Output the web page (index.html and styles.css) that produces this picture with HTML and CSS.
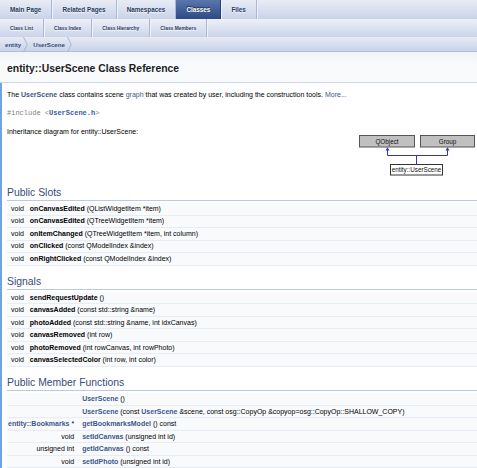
FILE: index.html
```html
<!DOCTYPE html>
<html lang="en">
<head>
<meta charset="utf-8">
<title>entity::UserScene Class Reference</title>
<link rel="stylesheet" href="styles.css">
</head>
<body>
<div class="navbar">
  <ul class="tabs tabs1">
    <li class="tab">Main Page</li>
    <li class="tab">Related Pages</li>
    <li class="tab">Namespaces</li>
    <li class="tab active">Classes</li>
    <li class="tab">Files</li>
  </ul>
  <ul class="tabs tabs2">
    <li class="tab">Class List</li>
    <li class="tab">Class Index</li>
    <li class="tab">Class Hierarchy</li>
    <li class="tab">Class Members</li>
  </ul>
  <ul class="navpath">
    <li class="crumb first">entity</li>
    <li class="sep"><svg width="5" height="15" viewBox="0 0 5 15"><path d="M0.5 0 L4.3 7.5 L0.5 15" fill="none" stroke="#9fb0d2" stroke-width="0.9"/></svg></li>
    <li class="crumb">UserScene</li>
    <li class="sep"><svg width="5" height="15" viewBox="0 0 5 15"><path d="M0.5 0 L4.3 7.5 L0.5 15" fill="none" stroke="#9fb0d2" stroke-width="0.9"/></svg></li>
  </ul>
</div>
<div class="header">
  <div class="title">entity::UserScene Class Reference</div>
</div>
<div class="contents">
  <p class="desc">The <a class="el">UserScene</a> class contains scene <a class="plain">graph</a> that was created by user, including the construction tools. <a class="plain">More...</a></p>
  <p class="include"><span class="pre">#include &lt;</span><a class="code">UserScene.h</a><span class="pre">&gt;</span></p>
  <p class="inh">Inheritance diagram for entity::UserScene:</p>
  <div class="diagram">
    <svg width="120" height="44" viewBox="0 0 120 44">
      <rect x="2.5" y="2.5" width="55" height="11.5" fill="#c0c0c0" stroke="#555"/>
      <rect x="63.5" y="2.5" width="54" height="11.5" fill="#c0c0c0" stroke="#555"/>
      <text x="30" y="10.9" text-anchor="middle" class="dtext">QObject</text>
      <text x="90.5" y="10.9" text-anchor="middle" class="dtext">Group</text>
      <rect x="33.5" y="31.5" width="52" height="10.5" fill="#fff" stroke="#333"/>
      <text x="59.5" y="39.3" text-anchor="middle" class="dtext">entity::UserScene</text>
      <path d="M59.5 31 V22.5 M30.5 22.5 H90.5 M30.5 22.5 V16 M90.5 22.5 V16" fill="none" stroke="#3636b0" stroke-width="1"/>
      <path d="M28.5 17.5 L30.5 14.2 L32.5 17.5 Z M88.5 17.5 L90.5 14.2 L92.5 17.5 Z" fill="#3636b0"/>
    </svg>
  </div>

  <h2 class="groupheader">Public Slots</h2>
  <table class="memberdecls">
    <tr><td class="left">void</td><td class="right"><b>onCanvasEdited</b> (QListWidgetItem *item)</td></tr>
    <tr><td class="left">void</td><td class="right"><b>onCanvasEdited</b> (QTreeWidgetItem *item)</td></tr>
    <tr><td class="left">void</td><td class="right"><b>onItemChanged</b> (QTreeWidgetItem *item, int column)</td></tr>
    <tr><td class="left">void</td><td class="right"><b>onClicked</b> (const QModelIndex &amp;index)</td></tr>
    <tr><td class="left">void</td><td class="right"><b>onRightClicked</b> (const QModelIndex &amp;index)</td></tr>
  </table>

  <h2 class="groupheader">Signals</h2>
  <table class="memberdecls">
    <tr><td class="left">void</td><td class="right"><b>sendRequestUpdate</b> ()</td></tr>
    <tr><td class="left">void</td><td class="right"><b>canvasAdded</b> (const std::string &amp;name)</td></tr>
    <tr><td class="left">void</td><td class="right"><b>photoAdded</b> (const std::string &amp;name, int idxCanvas)</td></tr>
    <tr><td class="left">void</td><td class="right"><b>canvasRemoved</b> (int row)</td></tr>
    <tr><td class="left">void</td><td class="right"><b>photoRemoved</b> (int rowCanvas, int rowPhoto)</td></tr>
    <tr><td class="left">void</td><td class="right"><b>canvasSelectedColor</b> (int row, int color)</td></tr>
  </table>

  <h2 class="groupheader">Public Member Functions</h2>
  <table class="memberdecls wide">
    <tr><td class="left">&nbsp;</td><td class="right"><a class="el">UserScene</a> ()</td></tr>
    <tr><td class="left">&nbsp;</td><td class="right"><a class="el">UserScene</a> (const <a class="el">UserScene</a> &amp;scene, const osg::CopyOp &amp;copyop=osg::CopyOp::SHALLOW_COPY)</td></tr>
    <tr><td class="left"><a class="el">entity::Bookmarks</a> *</td><td class="right"><a class="el">getBookmarksModel</a> () const</td></tr>
    <tr><td class="left">void</td><td class="right"><a class="el">setIdCanvas</a> (unsigned int id)</td></tr>
    <tr><td class="left">unsigned int</td><td class="right"><a class="el">getIdCanvas</a> () const</td></tr>
    <tr><td class="left">void</td><td class="right"><a class="el">setIdPhoto</a> (unsigned int id)</td></tr>
  </table>
</div>
</body>
</html>
```

FILE: styles.css
```css
html, body {
  margin: 0;
  padding: 0;
  background: #fff;
}
body {
  font-family: "Liberation Sans", Arial, sans-serif;
  font-size: 7px;
  color: #000;
  overflow: hidden;
}
ul {
  list-style: none;
  margin: 0;
  padding: 0;
}
.tabs {
  display: flex;
  background: linear-gradient(#e8ecf5, #c9d3e8);
  font-weight: bold;
  color: #283a5d;
  text-shadow: 0 1px 1px rgba(255,255,255,0.9);
}
.tabs1 {
  height: 19px;
  font-size: 6.3px;
}
.tabs2 {
  height: 18px;
  font-size: 4.9px;
  background: linear-gradient(#edf0f7, #cbd4e8);
}
.tab {
  display: flex;
  align-items: center;
  border-right: 1px solid #a9b8d7;
  box-shadow: 1px 0 0 #eef1f8;
}
.tabs1 .tab {
  padding: 0 10.1px;
}
.tabs2 .tab {
  padding: 0 10px;
}
.tab.active {
  background: linear-gradient(#5a76ad, #2e4a84);
  color: #fff;
  text-shadow: 0 -1px 1px rgba(0,0,0,0.6);
  border-right: 1px solid #27406f;
}
.navpath {
  display: flex;
  align-items: center;
  height: 15px;
  background: linear-gradient(#e6eaf4, #c9d3e8);
  border-bottom: 1px solid #b2c0dd;
  font-weight: bold;
  font-size: 6.1px;
  color: #364d7c;
  box-sizing: border-box;
}
.crumb.first {
  padding-left: 5px;
}
.sep {
  display: flex;
  margin: 0 5px 0 2px;
}
.header {
  height: 30px;
  background: linear-gradient(#f1f3f8, #f9fafc 40%);
  border-bottom: 1px solid #cdd6ea;
  display: flex;
  align-items: center;
  padding-left: 7px;
}
.title {
  font-size: 10.4px;
  font-weight: bold;
  color: #1c1c1c;
  padding-top: 2px;
}
.contents {
  border-left: 2px solid #6ea4e4;
  padding-left: 5px;
  padding-top: 1px;
  min-height: 400px;
}
p {
  margin: 0;
  line-height: 9px;
}
.desc {
  margin-top: 6px;
}
.include {
  margin-top: 9.6px;
  font-family: "Liberation Mono", "Courier New", monospace;
  font-size: 7px;
}
.inh {
  margin-top: 9.3px;
}
.pre {
  color: #808080;
}
a.el {
  color: #3d578c;
  font-weight: bold;
  text-decoration: none;
}
a.plain {
  color: #3d578c;
  text-decoration: none;
}
a.code {
  color: #3d5ba0;
  font-weight: bold;
}
.diagram {
  display: flex;
  justify-content: flex-end;
  margin-top: -3px;
  margin-bottom: 2px;
}
.diagram svg {
  display: block;
}
.dtext {
  font-family: "Liberation Sans", Arial, sans-serif;
  font-size: 6.3px;
  fill: #111;
}
h2.groupheader {
  font-size: 10.4px;
  line-height: 12px;
  font-weight: normal;
  color: #354c7b;
  margin: 10px 0 0;
  padding-bottom: 1px;
  border-bottom: 1px solid #bcc9e3;
}
.memberdecls {
  width: 100%;
  border-collapse: collapse;
  margin-top: 2.3px;
  background: #f9fafc;
}
.memberdecls td {
  padding: 0 3px;
  height: 11.5px;
  line-height: 8px;
  border-bottom: 1px solid #e8ecf4;
  white-space: nowrap;
  vertical-align: middle;
}
.memberdecls td.left {
  text-align: right;
  width: 1%;
  padding-left: 4px;
}
.memberdecls.wide td.left {
  padding-left: 1px;
  padding-right: 5px;
}
.memberdecls td.right {
  padding-left: 3px;
}
```
